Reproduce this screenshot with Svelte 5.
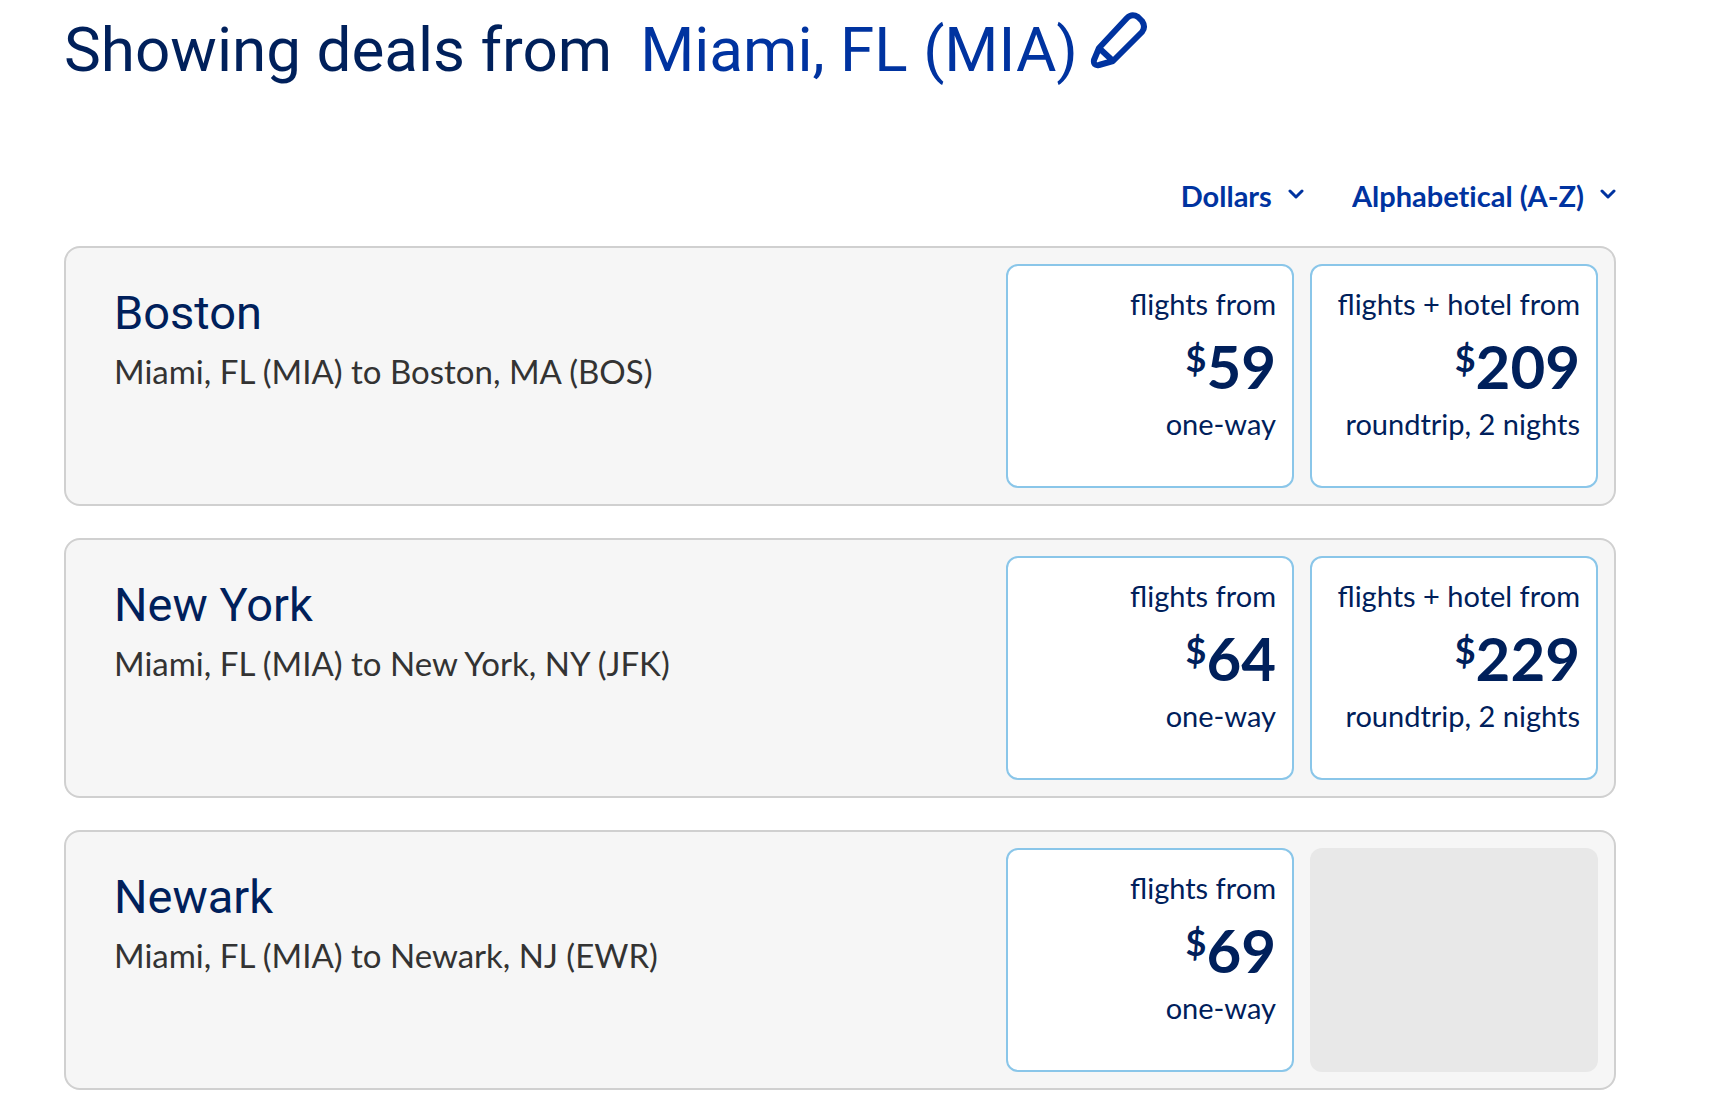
<script lang="ts">
  interface Fare {
    label: string;
    price: number;
    terms: string;
  }

  interface Deal {
    city: string;
    route: string;
    flight: Fare;
    bundle: Fare | null;
  }

  const origin = 'Miami, FL (MIA)';

  let currency = $state('Dollars');
  let sortBy = $state('Alphabetical (A-Z)');

  function flight(price: number): Fare {
    return { label: 'flights from', price, terms: 'one-way' };
  }

  function bundle(price: number): Fare {
    return { label: 'flights + hotel from', price, terms: 'roundtrip, 2 nights' };
  }

  const deals: Deal[] = [
    { city: 'Boston', route: `${origin} to Boston, MA (BOS)`, flight: flight(59), bundle: bundle(209) },
    { city: 'New York', route: `${origin} to New York, NY (JFK)`, flight: flight(64), bundle: bundle(229) },
    { city: 'Newark', route: `${origin} to Newark, NJ (EWR)`, flight: flight(69), bundle: null }
  ];
</script>

{#snippet chevron()}
  <svg class="chevron" viewBox="0 0 16 10" aria-hidden="true">
    <path d="M2 2l6 6 6-6" />
  </svg>
{/snippet}

{#snippet fareBox(fare: Fare)}
  <a class="fare" href="#book">
    <span class="fare-label">{fare.label}</span>
    <span class="price"><span class="currency">$</span>{fare.price}</span>
    <span class="fare-terms">{fare.terms}</span>
  </a>
{/snippet}

<main class="deals-page">
  <!-- Origin -->
  <h1 class="heading">
    <span>Showing deals from</span>
    <button type="button" class="origin">
      {origin}
      <svg class="pencil" viewBox="0 0 58 58" aria-hidden="true">
        <path d="M9 36L37 6Q42 1 48 5L52 9Q56 15 52 20L23 49L9 53Q3 54 4 48ZM9 36L23 49" />
      </svg>
    </button>
  </h1>

  <!-- Currency and sort -->
  <div class="filters">
    <label class="filter">
      <select bind:value={currency} aria-label="Currency">
        <option>Dollars</option>
        <option>Points</option>
      </select>
      {@render chevron()}
    </label>
    <label class="filter">
      <select bind:value={sortBy} aria-label="Sort by">
        <option>Alphabetical (A-Z)</option>
        <option>Price (low to high)</option>
      </select>
      {@render chevron()}
    </label>
  </div>

  <!-- Deals -->
  <div class="deal-list">
    {#each deals as deal (deal.city)}
      <article class="deal">
        <div class="destination">
          <h2 class="city">{deal.city}</h2>
          <p class="route">{deal.route}</p>
        </div>
        {@render fareBox(deal.flight)}
        {#if deal.bundle}
          {@render fareBox(deal.bundle)}
        {:else}
          <div class="fare-empty"></div>
        {/if}
      </article>
    {/each}
  </div>
</main>

<style>
  :global(body) {
    background: #fff;
  }

  .deals-page {
    padding: 8px 118px 22px 64px;
    font-family: Lato, 'Open Sans', sans-serif;
    color: #00205b;
  }

  /* Heading */
  .heading {
    display: flex;
    align-items: center;
    gap: 28px;
    margin: 0;
    font-family: Roboto, sans-serif;
    font-size: 62px;
    font-weight: 400;
    line-height: 84px;
  }

  .origin {
    display: flex;
    align-items: flex-start;
    gap: 12px;
    padding: 0;
    border: none;
    background: none;
    font: inherit;
    color: #0033a0;
    cursor: pointer;
  }

  .pencil {
    width: 58px;
    height: 58px;
    margin-top: 4px;
    fill: none;
    stroke: currentColor;
    stroke-width: 6;
    stroke-linejoin: round;
  }

  /* Filters */
  .filters {
    display: flex;
    justify-content: flex-end;
    gap: 48px;
    margin: 84px 0 30px;
  }

  .filter {
    display: grid;
    align-items: center;
    color: #0033a0;
  }

  .filter > :global(*) {
    grid-area: 1 / 1;
  }

  .filter select {
    field-sizing: content;
    appearance: none;
    padding: 0 32px 0 0;
    border: none;
    background: none;
    font-family: inherit;
    font-size: 29px;
    font-weight: 700;
    font-variant-ligatures: no-common-ligatures;
    line-height: 40px;
    color: inherit;
    cursor: pointer;
  }

  .chevron {
    justify-self: end;
    width: 16px;
    height: 10px;
    margin-bottom: 4px;
    fill: none;
    stroke: currentColor;
    stroke-width: 3;
    stroke-linecap: round;
    stroke-linejoin: round;
    pointer-events: none;
  }

  /* Deal cards */
  .deal-list {
    display: flex;
    flex-direction: column;
    gap: 32px;
  }

  .deal {
    display: flex;
    gap: 16px;
    padding: 16px;
    border: 2px solid #d0d0d0;
    border-radius: 16px;
    background: #f6f6f6;
  }

  .destination {
    flex: 1;
    padding: 16px 32px;
  }

  .city {
    margin: 0;
    font-family: Roboto, sans-serif;
    font-size: 47px;
    font-weight: 400;
    line-height: 66px;
  }

  .route {
    margin: 0;
    font-size: 33px;
    line-height: 50px;
    color: #333;
  }

  .fare,
  .fare-empty {
    box-sizing: border-box;
    width: 288px;
    min-height: 224px;
    border-radius: 12px;
  }

  .fare {
    display: flex;
    flex-direction: column;
    align-items: flex-end;
    padding: 16px;
    border: 2px solid #8ac6e9;
    background: #fff;
    color: inherit;
    text-decoration: none;
  }

  .fare-empty {
    background: #e8e8e8;
  }

  .fare-label,
  .fare-terms {
    font-size: 29px;
    line-height: 44px;
  }

  .fare-terms {
    line-height: 36px;
  }

  .price {
    display: flex;
    align-items: flex-start;
    font-size: 60px;
    font-weight: 700;
    line-height: 80px;
  }

  .currency {
    font-size: 36px;
    line-height: 64px;
  }
</style>
